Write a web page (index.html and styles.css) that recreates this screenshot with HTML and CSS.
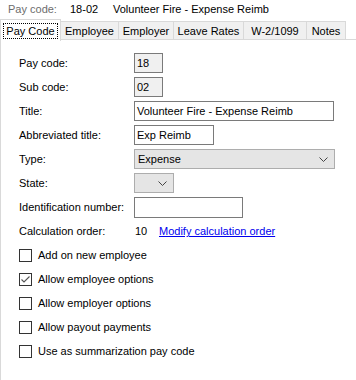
FILE: index.html
```html
<!DOCTYPE html>
<html>
<head>
<meta charset="utf-8">
<link rel="stylesheet" href="styles.css">
</head>
<body>
<div class="header">
  <span class="h-label">Pay code:</span>
  <span class="h-code">18-02</span>
  <span class="h-title">Volunteer Fire - Expense Reimb</span>
</div>
<div class="tabs">
  <div class="tab active"><span class="focus">Pay Code</span></div>
  <div class="tab t-emp">Employee</div>
  <div class="tab t-er">Employer</div>
  <div class="tab t-leave">Leave Rates</div>
  <div class="tab t-w2">W-2/1099</div>
  <div class="tab t-notes">Notes</div>
  <div class="tab-rest"></div>
</div>
<div class="panel">
  <div class="form">
    <div class="row"><span class="label">Pay code:</span><div class="box ro w-code">18</div></div>
    <div class="row"><span class="label">Sub code:</span><div class="box ro w-code">02</div></div>
    <div class="row"><span class="label">Title:</span><div class="box w-title">Volunteer Fire - Expense Reimb</div></div>
    <div class="row"><span class="label">Abbreviated title:</span><div class="box w-abbr">Exp Reimb</div></div>
    <div class="row"><span class="label">Type:</span><div class="select w-type"><span>Expense</span><svg class="chev" width="9" height="5" viewBox="0 0 9 5"><path d="M0.5 0.5 L4.5 4.5 L8.5 0.5" fill="none" stroke="#444" stroke-width="1"/></svg></div></div>
    <div class="row"><span class="label">State:</span><div class="select w-state"><span></span><svg class="chev" width="9" height="5" viewBox="0 0 9 5"><path d="M0.5 0.5 L4.5 4.5 L8.5 0.5" fill="none" stroke="#444" stroke-width="1"/></svg></div></div>
    <div class="row"><span class="label">Identification number:</span><div class="box w-id"></div></div>
    <div class="row"><span class="label">Calculation order:</span><span class="order">10</span><a class="link" href="#">Modify calculation order</a></div>
  </div>
  <div class="checks">
    <label class="check"><span class="cb"></span>Add on new employee</label>
    <label class="check"><span class="cb"><svg width="11" height="11" viewBox="0 0 11 11"><path d="M1.5 5.5 L4 8 L9.5 2.5" fill="none" stroke="#555" stroke-width="1.1"/></svg></span>Allow employee options</label>
    <label class="check"><span class="cb"></span>Allow employer options</label>
    <label class="check"><span class="cb"></span>Allow payout payments</label>
    <label class="check"><span class="cb"></span>Use as summarization pay code</label>
  </div>
</div>
</body>
</html>
```
FILE: styles.css
```css
html, body {
  margin: 0;
  padding: 0;
  background: #fff;
}
body {
  font-family: "Liberation Sans", Arial, sans-serif;
  font-size: 11px;
  color: #000;
  width: 356px;
  height: 380px;
  overflow: hidden;
}
.header {
  display: flex;
  height: 18px;
  align-items: center;
  padding-left: 8px;
  background: #fff;
}
.h-label { width: 62px; color: #6d6d6d; }
.h-code { width: 43px; }
.tabs {
  display: flex;
  align-items: flex-end;
  height: 22px;
  background: #fff;
}
.tab {
  box-sizing: border-box;
  height: 19px;
  background: #f0f0f0;
  border: 1px solid #d9d9d9;
  margin-left: -1px;
  display: flex;
  align-items: center;
  justify-content: center;
}
.tab.active {
  background: #fff;
  height: 22px;
  margin-left: 0;
  width: 61px;
  border-bottom: none;
  position: relative;
  z-index: 1;
  margin-bottom: -1px;
}
.focus {
  outline: 1px dotted #000;
  padding: 0 2px;
  line-height: 14px;
}
.t-emp { width: 59px; }
.t-er { width: 56px; }
.t-leave { width: 71px; }
.t-w2 { width: 64px; }
.t-notes { width: 40px; }
.tab-rest {
  flex: 1;
  border-bottom: 1px solid #d9d9d9;
  height: 0;
}
.panel {
  background: #fff;
  border-left: 1px solid #d9d9d9;
  height: 341px;
  box-sizing: border-box;
  padding: 11px 0 0 18px;
}
.row {
  display: flex;
  align-items: center;
  height: 24px;
}
.label { width: 115px; flex: none; }
.box {
  box-sizing: border-box;
  height: 20px;
  border: 1px solid #7a7a7a;
  background: #fff;
  padding: 0 2px;
  display: flex;
  align-items: center;
}
.box.ro { background: #f0f0f0; }
.w-code { width: 29px; }
.w-title { width: 200px; }
.w-abbr { width: 80px; }
.w-id { width: 109px; height: 21px; }
.select {
  box-sizing: border-box;
  height: 20px;
  border: 1px solid #adadad;
  background: #e5e5e5;
  display: flex;
  align-items: center;
  justify-content: space-between;
  padding: 0 6px 0 3px;
}
.w-type { width: 201px; }
.w-state { width: 40px; }
.chev { display: block; }
.order { width: 24px; padding-left: 1px; }
.link { color: #0000ee; text-decoration: underline; }
.check {
  display: flex;
  align-items: center;
  height: 24px;
}
.cb {
  box-sizing: border-box;
  width: 13px;
  height: 13px;
  border: 1px solid #333;
  background: #fff;
  margin-right: 6px;
  display: flex;
  align-items: center;
  justify-content: center;
}
.cb svg { display: block; }
```
